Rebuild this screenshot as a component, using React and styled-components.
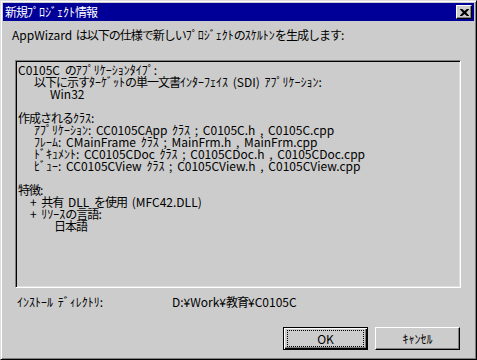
import React from "react";
import styled, { createGlobalStyle } from "styled-components";

const Global = createGlobalStyle`
  html, body { margin: 0; padding: 0; background: #cccccc; }
  body { font-family: "Noto Sans CJK JP", "Liberation Sans", sans-serif; font-size: 12px; color: #000; }
  * { box-sizing: border-box; }
`;

const Window = styled.div`
  width: 477px;
  height: 360px;
  background: #cccccc;
  border: 1px solid;
  border-color: #dfdfdf #000000 #000000 #dfdfdf;
  box-shadow: inset 1px 1px #ffffff, inset -1px -1px #808080;
  padding: 2px;
  display: flex;
  flex-direction: column;
`;

const TitleBar = styled.div`
  height: 18px;
  background: #000099;
  display: flex;
  align-items: center;
  justify-content: space-between;
  padding: 0 2px 0 2px;
`;

const TitleText = styled.span`
  color: #ffffff;
  font-size: 12px;
  line-height: 14px;
`;

const CloseButton = styled.div`
  width: 16px;
  height: 14px;
  background: #cccccc;
  border: 1px solid;
  border-color: #ffffff #000000 #000000 #ffffff;
  box-shadow: inset -1px -1px #808080;
  display: flex;
  align-items: center;
  justify-content: center;
`;

const Body = styled.div`
  display: flex;
  flex-direction: column;
  word-spacing: 2px;
`;

const Intro = styled.div`
  margin: 7px 0 0 9px;
  line-height: 14px;
  white-space: nowrap;
  word-spacing: 1px;
`;

const GroupBox = styled.div`
  margin: 18px 0 0 12px;
  width: 446px;
  height: 228px;
  border: 1px solid;
  border-color: #808080 #ffffff #ffffff #808080;
  box-shadow: inset 1px 1px #000000, inset -1px -1px #dfdfdf;
  padding: 3px 0 0 2px;
`;

const Line = styled.div`
  line-height: 12px;
  height: 12px;
  white-space: nowrap;
  padding-left: ${(p) => p.$indent || 0}px;
`;

const Zen = styled.span`
  letter-spacing: -1px;
`;

const InstallRow = styled.div`
  display: grid;
  grid-template-columns: 155px auto;
  margin: 7px 0 0 14px;
  line-height: 14px;
  white-space: nowrap;
`;

const ButtonRow = styled.div`
  display: flex;
  justify-content: flex-end;
  gap: 7px;
  margin: 18px 14px 0 0;
`;

const Button = styled.button`
  width: 85px;
  height: 23px;
  background: #cccccc;
  font-family: "Noto Sans CJK JP", "Liberation Sans", sans-serif;
  font-size: 12px;
  color: #000;
  padding: 0;
  border: 1px solid;
  border-color: ${(p) => (p.$default ? "#000000" : "#ffffff #000000 #000000 #ffffff")};
  box-shadow: ${(p) =>
    p.$default
      ? "inset 1px 1px #ffffff, inset -1px -1px #000000, inset -2px -2px #808080"
      : "inset -1px -1px #808080"};
  display: flex;
  align-items: center;
  justify-content: center;
`;

const FocusRect = styled.span`
  display: flex;
  align-items: center;
  justify-content: center;
  width: 75px;
  height: 15px;
  outline: 1px dotted #000;
  line-height: 14px;
`;

const Label = styled.span`
  line-height: 14px;
`;

const FULL = /([\u3000-\u30ff\u4e00-\u9fff]+)/;

function T({ children }) {
  const parts = String(children).split(FULL);
  return (
    <>
      {parts.map((p, i) => (i % 2 === 1 ? <Zen key={i}>{p}</Zen> : <React.Fragment key={i}>{p}</React.Fragment>))}
    </>
  );
}

const groupLines = [
  [0, "C0105C のｱﾌﾟﾘｹｰｼｮﾝﾀｲﾌﾟ:"],
  [16, "以下に示すﾀｰｹﾞｯﾄの単一文書ｲﾝﾀｰﾌｪｲｽ (SDI) ｱﾌﾟﾘｹｰｼｮﾝ:"],
  [32, "Win32"],
  [0, ""],
  [0, "作成されるｸﾗｽ:"],
  [16, "ｱﾌﾟﾘｹｰｼｮﾝ: CC0105CApp ｸﾗｽ ; C0105C.h , C0105C.cpp"],
  [16, "ﾌﾚｰﾑ: CMainFrame ｸﾗｽ ; MainFrm.h , MainFrm.cpp"],
  [16, "ﾄﾞｷｭﾒﾝﾄ: CC0105CDoc ｸﾗｽ ; C0105CDoc.h , C0105CDoc.cpp"],
  [16, "ﾋﾞｭｰ: CC0105CView ｸﾗｽ ; C0105CView.h , C0105CView.cpp"],
  [0, ""],
  [0, "特徴:"],
  [12, "+ 共有 DLL を使用 (MFC42.DLL)"],
  [12, "+ ﾘｿｰｽの言語:"],
  [36, "日本語"],
];

export default function App() {
  return (
    <>
      <Global />
      <Window>
        <TitleBar>
          <TitleText>
            <T>新規ﾌﾟﾛｼﾞｪｸﾄ情報</T>
          </TitleText>
          <CloseButton>
            <svg width="9" height="7" viewBox="0 0 9 7">
              <path d="M0 0h2.2l2.3 2.1L6.8 0H9v.6L6.2 3.5 9 6.4V7H6.8L4.5 4.9 2.2 7H0v-.6l2.8-2.9L0 .6z" fill="#000" />
            </svg>
          </CloseButton>
        </TitleBar>
        <Body>
          <Intro>
            <T>AppWizard は以下の仕様で新しいﾌﾟﾛｼﾞｪｸﾄのｽｹﾙﾄﾝを生成します:</T>
          </Intro>
          <GroupBox>
            {groupLines.map(([indent, text], i) => (
              <Line key={i} $indent={indent}>
                <T>{text}</T>
              </Line>
            ))}
          </GroupBox>
          <InstallRow>
            <Label>ｲﾝｽﾄｰﾙ ﾃﾞｨﾚｸﾄﾘ:</Label>
            <Label>
              <T>D:¥Work¥教育¥C0105C</T>
            </Label>
          </InstallRow>
          <ButtonRow>
            <Button $default>
              <FocusRect>OK</FocusRect>
            </Button>
            <Button>ｷｬﾝｾﾙ</Button>
          </ButtonRow>
        </Body>
      </Window>
    </>
  );
}
